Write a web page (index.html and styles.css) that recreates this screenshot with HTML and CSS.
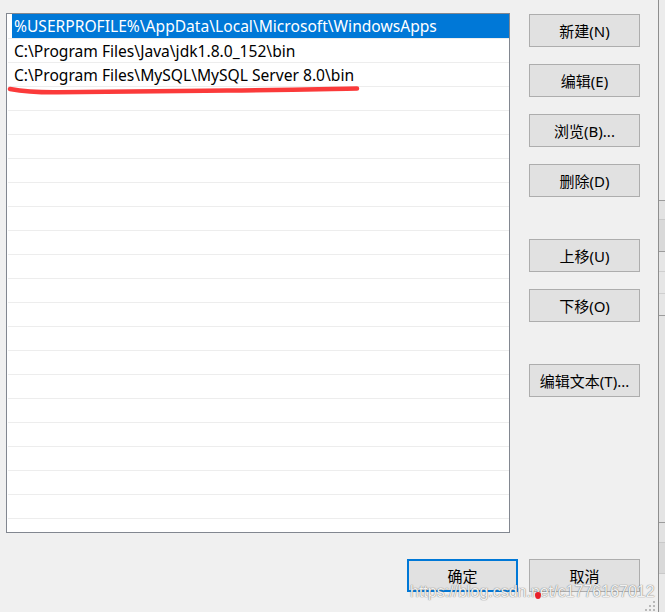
FILE: index.html
```html
<!DOCTYPE html>
<html>
<head>
<meta charset="utf-8">
<link rel="stylesheet" href="styles.css">
</head>
<body>
<div class="screen">
  <div class="dialog">
    <div class="main">
      <div class="listbox">
        <div class="row first"><div class="item sel">%USERPROFILE%\AppData\Local\Microsoft\WindowsApps</div></div>
        <div class="row"><div class="item">C:\Program Files\Java\jdk1.8.0_152\bin</div></div>
        <div class="row"><div class="item">C:\Program Files\MySQL\MySQL Server 8.0\bin</div></div>
        <div class="row"></div><div class="row"></div><div class="row"></div><div class="row"></div>
        <div class="row"></div><div class="row"></div><div class="row"></div><div class="row"></div>
        <div class="row"></div><div class="row"></div><div class="row"></div><div class="row"></div>
        <div class="row"></div><div class="row"></div><div class="row"></div><div class="row"></div>
        <div class="row"></div><div class="row"></div><div class="row"></div>
        <svg class="mark" width="370" height="20" viewBox="0 0 370 20">
          <path d="M3,9 C14,11 26,12.5 50,12.3 S 150,11 220,10.5 S 320,9 350,8.5" fill="none" stroke="#fb3a3a" stroke-width="4.5" stroke-linecap="round"/>
        </svg>
      </div>
      <div class="buttons">
        <div class="btn">新建(N)</div>
        <div class="btn">编辑(E)</div>
        <div class="btn">浏览(B)...</div>
        <div class="btn">删除(D)</div>
        <div class="btn group">上移(U)</div>
        <div class="btn">下移(O)</div>
        <div class="btn group">编辑文本(T)...</div>
      </div>
    </div>
    <div class="footer">
      <div class="btn focus">确定</div>
      <div class="btn">取消</div>
    </div>
    <div class="watermark">https://blog.csdn.net/c1776167012</div>
    <div class="dot"></div>
    <svg class="grip" width="12" height="12" viewBox="0 0 12 12">
      <rect x="9" y="1" width="2" height="2" fill="#b9b9b9"/>
      <rect x="5" y="5" width="2" height="2" fill="#b9b9b9"/>
      <rect x="9" y="5" width="2" height="2" fill="#b9b9b9"/>
      <rect x="1" y="9" width="2" height="2" fill="#b9b9b9"/>
      <rect x="5" y="9" width="2" height="2" fill="#b9b9b9"/>
      <rect x="9" y="9" width="2" height="2" fill="#b9b9b9"/>
    </svg>
  </div>
  <div class="edge"></div>
  <div class="behind">
    <div class="b1"></div>
    <div class="b2"></div>
    <div class="b3"></div>
    <div class="b4"></div>
    <div class="b5"></div>
    <div class="b6"></div>
    <div class="b7"></div>
    <div class="b8"></div>
    <div class="b9"></div>
  </div>
</div>
</body>
</html>
```
FILE: styles.css
```css
html, body {
  margin: 0;
  padding: 0;
}
body {
  background: #f0f0f0;
  font-family: "Noto Sans", "Noto Sans CJK SC", sans-serif;
  color: #000;
}
.screen {
  display: flex;
  width: 665px;
  height: 612px;
  overflow: hidden;
}
.dialog {
  position: relative;
  width: 658px;
  flex: none;
  background: #f0f0f0;
}
.main {
  display: flex;
  padding: 13px 0 0 6px;
}
.listbox {
  position: relative;
  width: 504px;
  height: 520px;
  box-sizing: border-box;
  border: 1px solid #828790;
  background: #fff;
  overflow: hidden;
}
.row {
  height: 24px;
  box-sizing: border-box;
  margin-left: 1px;
  border-bottom: 1px solid #ededed;
}
.row.first {
  height: 25px;
}
.item {
  height: 23px;
  box-sizing: border-box;
  padding-top: 1px;
  line-height: 22px;
  font-size: 15.6px;
  padding-left: 6px;
  white-space: nowrap;
}
.item.sel {
  height: 24px;
  line-height: 23px;
  margin-left: 4px;
  padding-left: 2px;
  background: #0078d7;
  color: #fff;
}
.mark {
  position: absolute;
  left: 0;
  top: 66px;
}
.buttons {
  display: flex;
  flex-direction: column;
  gap: 17px;
  margin-left: 19px;
  padding-top: 1px;
}
.btn {
  width: 111px;
  height: 33px;
  box-sizing: border-box;
  border: 1px solid #adadad;
  background: #e1e1e1;
  font-size: 15px;
  display: flex;
  align-items: center;
  justify-content: center;
}
.btn.group {
  margin-top: 25px;
}
.btn.focus {
  border: 2px solid #0078d7;
}
.footer {
  display: flex;
  justify-content: flex-end;
  gap: 11px;
  margin-top: 26px;
  padding-right: 18px;
}
.watermark {
  position: absolute;
  left: 410px;
  top: 583px;
  font-family: "Liberation Sans", Arial, sans-serif;
  font-size: 16px;
  line-height: 18px;
  color: rgba(255, 255, 255, 0.92);
  text-shadow: 0 0 1px rgba(90, 90, 90, 0.8), 0 0 1px rgba(90, 90, 90, 0.5);
  white-space: nowrap;
}
.dot {
  position: absolute;
  left: 535px;
  top: 592px;
  width: 6px;
  height: 7px;
  border-radius: 50% 50% 50% 50% / 40% 40% 60% 60%;
  background: #e8202a;
}
.grip {
  position: absolute;
  left: 644px;
  top: 600px;
}
.edge {
  width: 1px;
  flex: none;
  background: #8e8e8e;
}
.behind {
  flex: 1;
  display: flex;
  flex-direction: column;
  background: #e9e9e9;
}
.behind div {
  flex: none;
  box-sizing: border-box;
}
.b1 { height: 201px; background: #ececec; border-bottom: 1px solid #9c9c9c; }
.b2 { height: 19px; background: #e2e2e2; border-bottom: 1px solid #c9c9c9; }
.b3 { height: 32px; background: #d9d9d9; border-bottom: 1px solid #9c9c9c; }
.b4 { height: 20px; background: #e6e6e6; border-bottom: 1px solid #cfcfcf; }
.b5 { height: 22px; background: #e6e6e6; border-bottom: 1px solid #cfcfcf; }
.b6 { height: 22px; background: #e6e6e6; border-bottom: 1px solid #9c9c9c; }
.b7 { height: 207px; background: #e4e4e4; border-bottom: 1px solid #9c9c9c; }
.b8 { height: 20px; background: #e2e2e2; border-bottom: 1px solid #c9c9c9; }
.b9 { height: 31px; background: #d9d9d9; border-bottom: 1px solid #c9c9c9; }
```
